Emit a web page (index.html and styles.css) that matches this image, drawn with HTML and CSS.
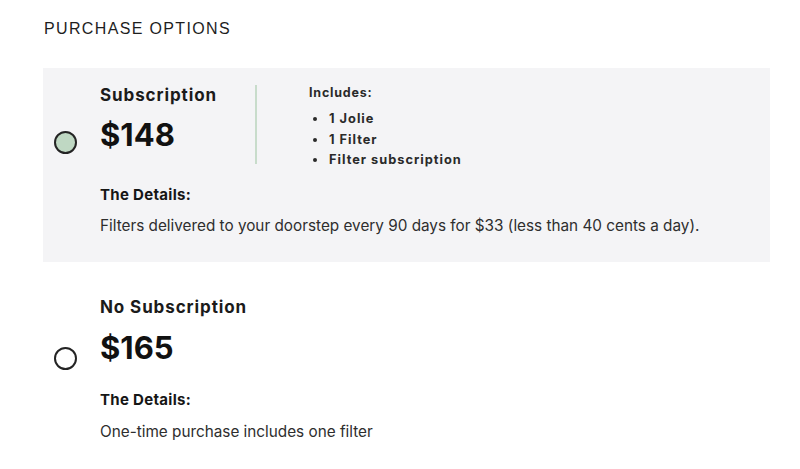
FILE: index.html
```html
<!DOCTYPE html>
<html lang="en">
<head>
<meta charset="utf-8">
<title>Purchase options</title>
<link rel="stylesheet" href="styles.css">
</head>
<body>
<main class="page">
  <h2 class="heading">PURCHASE OPTIONS</h2>

  <section class="option option--selected">
    <span class="radio radio--checked radio--first"></span>
    <div class="content">
      <div class="top-row">
        <div class="main">
          <h3 class="title">Subscription</h3>
          <div class="price">$148</div>
        </div>
        <div class="divider"></div>
        <div class="includes">
          <div class="includes-label">Includes:</div>
          <ul class="includes-list">
            <li>1 Jolie</li>
            <li>1 Filter</li>
            <li>Filter subscription</li>
          </ul>
        </div>
      </div>
      <div class="details-label details-label--first">The Details:</div>
      <p class="details-text">Filters delivered to your doorstep every 90 days for $33 (less than 40 cents a day).</p>
    </div>
  </section>

  <section class="option option--second">
    <span class="radio radio--second"></span>
    <div class="content">
      <div class="top-row">
        <div class="main">
          <h3 class="title">No Subscription</h3>
          <div class="price price--second">$165</div>
        </div>
      </div>
      <div class="details-label details-label--second">The Details:</div>
      <p class="details-text details-text--second">One-time purchase includes one filter</p>
    </div>
  </section>
</main>
</body>
</html>
```

FILE: styles.css
```css
html, body {
  margin: 0;
  padding: 0;
  background: #ffffff;
}

body {
  font-family: Inter, "Noto Sans", sans-serif;
  color: #1b1b1b;
}

.page {
  padding: 19px 30px 0 43px;
}

.heading {
  margin: 0 0 29px 1px;
  font-family: "Liberation Sans", Arial, sans-serif;
  font-weight: 400;
  font-size: 16px;
  line-height: 20px;
  letter-spacing: 1.35px;
  color: #1e1e1e;
}

.option {
  display: flex;
  align-items: flex-start;
  padding: 16px 0 25px 11px;
}

.option--selected {
  background: #f4f4f6;
}

.option--second {
  margin-top: 18px;
}

.radio {
  flex: none;
  box-sizing: border-box;
  width: 23px;
  height: 23px;
  border: 2px solid #242424;
  border-radius: 50%;
  margin-right: 23px;
}

.radio--checked {
  background: #bfd8c3;
}

.radio--first {
  margin-top: 47px;
}

.radio--second {
  margin-top: 51px;
}

.content {
  display: flex;
  flex-direction: column;
}

.top-row {
  display: flex;
  align-items: flex-start;
}

.main {
  width: 155px;
}

.title {
  margin: 0;
  font-size: 17px;
  line-height: 22px;
  font-weight: 700;
  letter-spacing: 0.9px;
  color: #1b1b1b;
}

.price {
  margin-top: 11px;
  font-size: 31px;
  line-height: 36px;
  font-weight: 700;
  color: #111111;
}

.price--second {
  margin-top: 12px;
}

.divider {
  width: 2px;
  height: 79px;
  margin-top: 1px;
  margin-right: 52px;
  background: #c8dccb;
}

.includes-label {
  font-size: 12.5px;
  line-height: 18px;
  font-weight: 700;
  letter-spacing: 0.8px;
  color: #2a2a2a;
}

.includes-list {
  list-style: none;
  margin: 7px 0 0;
  padding: 0 0 0 4px;
  font-size: 12.8px;
  line-height: 20.5px;
  font-weight: 700;
  letter-spacing: 1px;
  color: #2a2a2a;
}

.includes-list li {
  display: flex;
  align-items: center;
}

.includes-list li::before {
  content: "";
  flex: none;
  width: 4px;
  height: 4px;
  border-radius: 50%;
  background: #2a2a2a;
  margin-right: 12px;
}

.details-label {
  font-size: 15px;
  line-height: 20px;
  font-weight: 700;
  letter-spacing: 0.3px;
  color: #161616;
}

.details-label--first {
  margin-top: 14px;
}

.details-label--second {
  margin-top: 24px;
}

.details-text {
  margin: 10px 0 0;
  font-size: 15.3px;
  line-height: 22px;
  font-weight: 400;
  color: #2e2e2e;
}

.details-text--second {
  margin-top: 11px;
}
```
